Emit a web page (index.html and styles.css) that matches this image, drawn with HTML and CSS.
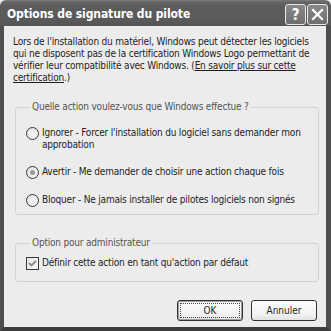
FILE: index.html
```html
<!DOCTYPE html>
<html lang="fr">
<head>
<meta charset="utf-8">
<title>Options de signature du pilote</title>
<link rel="stylesheet" href="styles.css">
</head>
<body>
<div class="window">
  <div class="titlebar">
    <span class="title">Options de signature du pilote</span>
    <div class="tb-buttons">
      <span class="tb-btn help">?</span>
      <span class="tb-btn close"><svg width="13" height="13" viewBox="0 0 13 13"><path d="M2 2 L11 11 M11 2 L2 11" stroke="#fff" stroke-width="2.2" stroke-linecap="square"/></svg></span>
    </div>
  </div>
  <div class="frame">
    <div class="content">
      <p class="intro">Lors de l'installation du matériel, Windows peut détecter les logiciels<br>qui ne disposent pas de la certification Windows Logo permettant de<br>vérifier leur compatibilité avec Windows. (<a class="link">En savoir plus sur cette<br>certification</a>.)</p>
      <fieldset class="group g1">
        <legend>Quelle action voulez-vous que Windows effectue ?</legend>
        <div class="option"><span class="radio"></span><span class="opt-text">Ignorer - Forcer l'installation du logiciel sans demander mon<br>approbation</span></div>
        <div class="option"><span class="radio checked"></span><span class="opt-text">Avertir - Me demander de choisir une action chaque fois</span></div>
        <div class="option"><span class="radio"></span><span class="opt-text">Bloquer - Ne jamais installer de pilotes logiciels non signés</span></div>
      </fieldset>
      <fieldset class="group g2">
        <legend>Option pour administrateur</legend>
        <div class="option"><span class="check"><svg width="11" height="11" viewBox="0 0 11 11"><path d="M2 5 L4.5 7.5 L9 3" fill="none" stroke="#8a8a8a" stroke-width="1.8"/></svg></span><span class="opt-text">Définir cette action en tant qu'action par défaut</span></div>
      </fieldset>
      <div class="buttons">
        <button class="btn default"><span class="focus">OK</span></button>
        <button class="btn">Annuler</button>
      </div>
    </div>
  </div>
</div>
</body>
</html>
```

FILE: styles.css
```css
html, body {
  margin: 0;
  padding: 0;
  background: #ececec;
}

.window {
  width: 331px;
  height: 331px;
  display: flex;
  flex-direction: column;
  font-family: "DejaVu Sans Condensed", "DejaVu Sans", sans-serif;
  font-stretch: condensed;
  font-size: 10px;
  letter-spacing: -0.2px;
  line-height: 12px;
  color: #1e1e1e;
  white-space: nowrap;
  overflow: hidden;
}

.titlebar {
  height: 26px;
  flex: none;
  display: flex;
  align-items: center;
  justify-content: space-between;
  padding: 0 3px 0 7px;
  background: linear-gradient(#7c7c7c 0, #666 2px, #5c5c5c 6px, #5a5a5a 20px, #555 26px);
  border-radius: 6px 6px 0 0;
}

.title {
  color: #fff;
  font-weight: bold;
  font-size: 12px;
  letter-spacing: -0.1px;
  padding-top: 2px;
}

.tb-buttons {
  display: flex;
  gap: 1px;
  padding-top: 3px;
}

.tb-btn {
  width: 19px;
  height: 19px;
  border: 1px solid #e8e8e8;
  border-radius: 3px;
  background: linear-gradient(#8a8a8a, #6e6e6e);
  display: flex;
  align-items: center;
  justify-content: center;
  color: #fff;
}

.help {
  font-family: "DejaVu Sans", sans-serif;
  font-weight: bold;
  font-size: 15px;
}

.frame {
  flex: 1;
  min-height: 0;
  display: flex;
  background: #5a5a5a;
  border-left: 4px solid #4e4e4e;
  border-right: 5px solid #4e4e4e;
  border-bottom: 4px solid #3c3c3c;
}

.content {
  flex: 1;
  background: #ececec;
  padding: 10px 7px 0 9px;
  display: flex;
  flex-direction: column;
}

.intro {
  margin: 0;
}

.link {
  text-decoration: underline;
}

.group {
  margin: 17px 0 0 2px;
  border: 1px solid #d2d2d2;
  border-radius: 3px;
  padding: 0 8px 0 10px;
  min-width: 0;
}

.group legend {
  padding: 0 2px;
  margin-left: 4px;
  color: #555;
  line-height: 12px;
}

.g1 {
  padding-top: 14px;
  padding-bottom: 7px;
  display: flex;
  flex-direction: column;
  gap: 15px;
}

.g2 {
  margin-top: 22px;
  padding-top: 8px;
  padding-bottom: 11px;
}

.option {
  display: flex;
  align-items: flex-start;
  gap: 3px;
}

.radio {
  width: 11px;
  height: 11px;
  flex: none;
  border: 1px solid #3a3a3a;
  border-radius: 50%;
  background: radial-gradient(circle at 60% 60%, #f8f8f8, #dcdcdc);
  position: relative;
}

.radio.checked::after {
  content: "";
  position: absolute;
  left: 3px;
  top: 3px;
  width: 5px;
  height: 5px;
  border-radius: 50%;
  background: #9a9a9a;
}

.check {
  width: 11px;
  height: 11px;
  flex: none;
  border: 1px solid #3a3a3a;
  background: linear-gradient(135deg, #e4e4e4, #fafafa);
  display: flex;
  align-items: center;
  justify-content: center;
}

.buttons {
  display: flex;
  justify-content: flex-end;
  gap: 8px;
  margin-top: 18px;
  padding-right: 2px;
}

.btn {
  width: 66px;
  height: 21px;
  border: 1px solid #333;
  border-radius: 3px;
  background: linear-gradient(#fdfdfd, #f2f2f2 70%, #e2e2e2);
  font: inherit;
  color: #1e1e1e;
  padding: 0;
  display: flex;
  align-items: center;
  justify-content: center;
}

.btn.default {
  box-shadow: inset 0 0 0 1px #9e9e9e;
  padding: 2px;
}

.focus {
  flex: 1;
  align-self: stretch;
  display: flex;
  align-items: center;
  justify-content: center;
  border: 1px dotted #444;
}
```
